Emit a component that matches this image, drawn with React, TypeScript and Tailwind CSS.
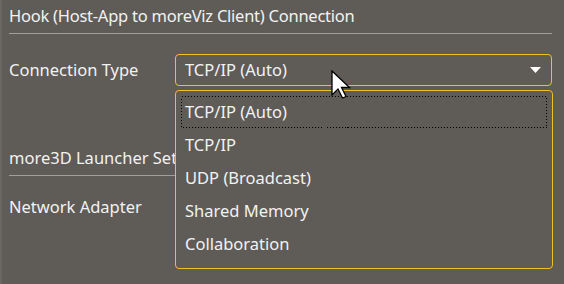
import React from 'react';

const options = ['TCP/IP (Auto)', 'TCP/IP', 'UDP (Broadcast)', 'Shared Memory', 'Collaboration'];

function Cursor() {
  return (
    <svg className="absolute left-[329px] top-[70px]" width="20" height="29" viewBox="0 0 20 29">
      <path
        d="M1 1 L1 25 L7 19 L11.5 28 L15 26.5 L10.5 17.5 L18.5 17.5 Z"
        fill="#ffffff"
        stroke="#000000"
        strokeWidth="1.3"
        strokeLinejoin="miter"
      />
    </svg>
  );
}

export default function App() {
  return (
    <div
      className="relative w-[564px] h-[284px] overflow-hidden bg-[#5f5b57] border-l-2 border-[#6a6662] text-[#f2f2f2] text-[16.5px]"
      style={{ fontFamily: '"Noto Sans", "Open Sans", sans-serif' }}
    >
      <div className="pl-[7px] pr-[12px]">
        {/* Hook section */}
        <div className="h-[33px] flex items-center tracking-[-0.25px]">Hook (Host-App to moreViz Client) Connection</div>
        <div className="h-px bg-[#a29e9a]" />

        <div className="mt-[20px] flex items-center h-[32px]">
          <div className="w-[166px]">Connection Type</div>
          <div className="flex-1 h-full rounded-[4px] border border-[#f0c020] flex items-center justify-between pl-[9px] pr-[10px]">
            <span>TCP/IP (Auto)</span>
            <svg width="11" height="6" viewBox="0 0 11 6">
              <path d="M0 0 L11 0 L5.5 6 Z" fill="#ffffff" />
            </svg>
          </div>
        </div>

        {/* Launcher section */}
        <div className="mt-[56px] h-[33px] flex items-center">more3D Launcher Settings</div>
        <div className="h-px bg-[#a29e9a]" />

        <div className="mt-[16px] flex items-center h-[31px]">
          <div className="w-[166px]">Network Adapter</div>
        </div>
      </div>

      {/* open dropdown */}
      <div className="absolute left-[173px] top-[90px] w-[378px] h-[179px] rounded-[4px] border border-[#f0c020] bg-[#5f5b57] px-[5px] pt-[5px]">
        {options.map((opt, i) => (
          <div key={opt} className="relative h-[33px] flex items-center px-[4px]">
            {i === 0 && (
              <svg className="absolute left-0 top-0" width="366" height="32" viewBox="0 0 366 32" shapeRendering="crispEdges">
                <rect x="0.5" y="0.5" width="365" height="31" fill="none" stroke="#000000" strokeWidth="1" strokeDasharray="1 2" />
              </svg>
            )}
            <span className="relative">{opt}</span>
          </div>
        ))}
      </div>

      <Cursor />
    </div>
  );
}
